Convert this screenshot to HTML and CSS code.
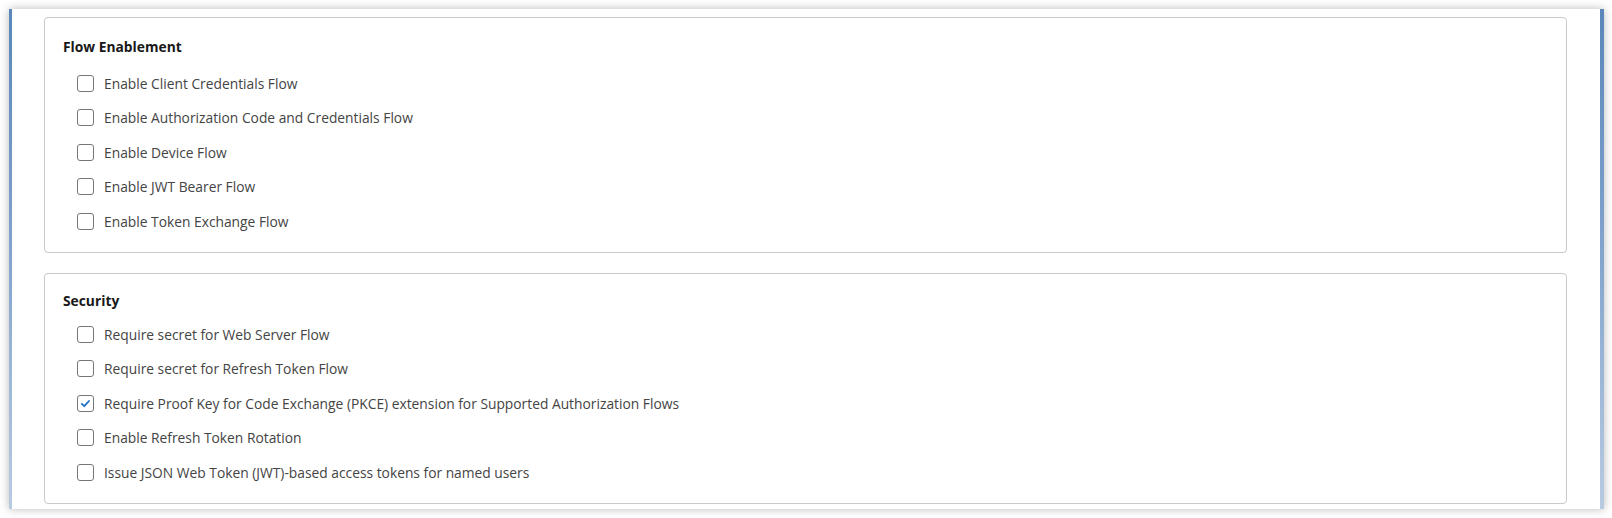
FILE: index.html
```html
<!DOCTYPE html>
<html>
<head>
<meta charset="utf-8">
<link rel="stylesheet" href="styles.css">
</head>
<body>
<div class="frame">
  <div class="panel">
    <section class="card card-flow">
      <h2 class="card-title">Flow Enablement</h2>
      <ul class="options">
        <li class="option"><span class="box"></span><span class="label">Enable Client Credentials Flow</span></li>
        <li class="option"><span class="box"></span><span class="label">Enable Authorization Code and Credentials Flow</span></li>
        <li class="option"><span class="box"></span><span class="label">Enable Device Flow</span></li>
        <li class="option"><span class="box"></span><span class="label">Enable JWT Bearer Flow</span></li>
        <li class="option"><span class="box"></span><span class="label">Enable Token Exchange Flow</span></li>
      </ul>
    </section>
    <section class="card card-security">
      <h2 class="card-title">Security</h2>
      <ul class="options">
        <li class="option"><span class="box"></span><span class="label">Require secret for Web Server Flow</span></li>
        <li class="option"><span class="box"></span><span class="label">Require secret for Refresh Token Flow</span></li>
        <li class="option"><span class="box checked"><svg viewBox="0 0 17 17" width="17" height="17"><path d="M4.8 8.9 L7.3 11.2 L12 6" fill="none" stroke="#1b6fc4" stroke-width="1.8" stroke-linecap="round" stroke-linejoin="round"/></svg></span><span class="label">Require Proof Key for Code Exchange (PKCE) extension for Supported Authorization Flows</span></li>
        <li class="option"><span class="box"></span><span class="label">Enable Refresh Token Rotation</span></li>
        <li class="option"><span class="box"></span><span class="label">Issue JSON Web Token (JWT)-based access tokens for named users</span></li>
      </ul>
    </section>
  </div>
</div>
</body>
</html>
```
FILE: styles.css
```css
html, body {
  margin: 0;
  padding: 0;
  background: #ffffff;
}
body {
  font-family: "Open Sans", "Noto Sans", "Liberation Sans", sans-serif;
  color: #444444;
}
.frame {
  padding: 9px 8px 9px 9px;
  height: 518px;
  box-sizing: border-box;
}
.panel {
  height: 500px;
  box-sizing: border-box;
  background: #ffffff;
  border-left: 3px solid #6a92c2;
  border-right: 4px solid #6a92c2;
  border-image: linear-gradient(to bottom, #5a86ba 0%, #7fa1cb 45%, #b9cbe1 100%) 1;
  box-shadow: 0 0 9px rgba(0, 0, 0, 0.28);
  padding: 8px 33px 0 32px;
  display: flex;
  flex-direction: column;
  gap: 20px;
}
.card {
  border: 1px solid #c9c9c9;
  border-radius: 4px;
  padding: 19px 18px 14px 18px;
}
.card-flow {
  height: 236px;
  box-sizing: border-box;
}
.card-security {
  height: 231px;
  box-sizing: border-box;
  padding-top: 17px;
}
.card-title {
  margin: 0;
  font-size: 13.8px;
  line-height: 20px;
  font-weight: 700;
  color: #181818;
}
.options {
  list-style: none;
  margin: 0;
  padding: 0 0 0 14px;
}
.card-flow .options {
  margin-top: 9px;
}
.card-security .options {
  margin-top: 6px;
}
.option {
  height: 34.5px;
  display: flex;
  align-items: center;
  gap: 10px;
}
.box {
  width: 17px;
  height: 17px;
  box-sizing: border-box;
  border: 1px solid #767676;
  border-radius: 3px;
  background: #ffffff;
  display: flex;
  align-items: center;
  justify-content: center;
  flex: none;
}
.box svg {
  display: block;
  margin: -1px;
}
.label {
  font-size: 13.8px;
  line-height: 19px;
}
```
